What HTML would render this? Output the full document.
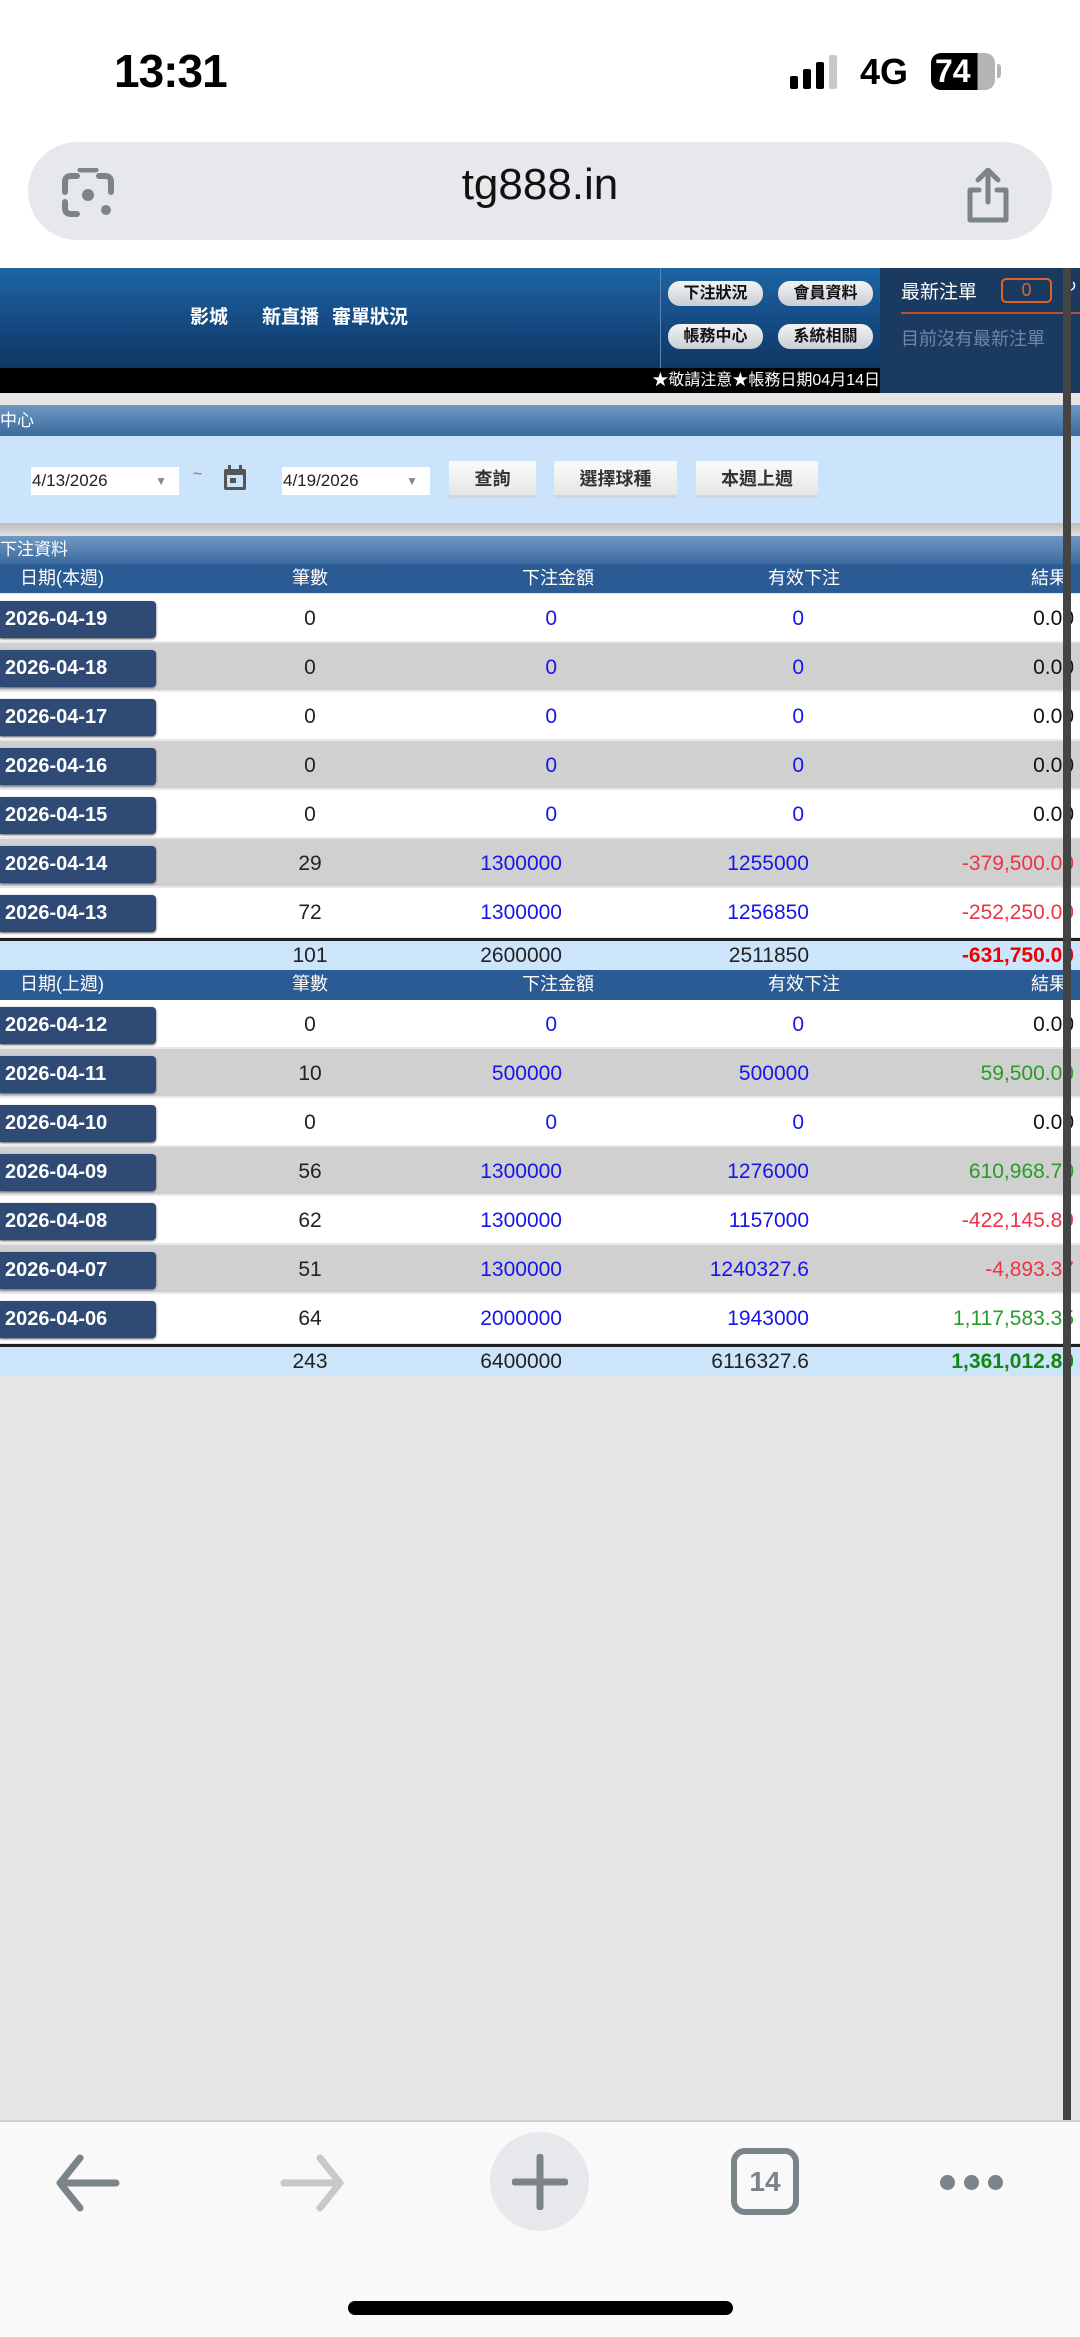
<!DOCTYPE html>
<html><head><meta charset="utf-8"><style>
*{margin:0;padding:0;box-sizing:border-box}
body{width:1080px;height:2337px;position:relative;overflow:hidden;background:#e5e5e5;font-family:"Liberation Sans","Noto Sans CJK TC",sans-serif}
.a{position:absolute}
.top{left:0;top:0;width:1080px;height:268px;background:#fff}
.hdr{left:0;top:268px;width:880px;height:100px;background:linear-gradient(#1e65a6,#14487f 60%,#0f3763)}
.blk{left:0;top:368px;width:880px;height:25px;background:#000;color:#fff;font-size:16px;line-height:25px;text-align:right;white-space:nowrap;overflow:hidden}
.rp{left:880px;top:268px;width:200px;height:125px;background:#1b3a60}
.hb{height:25px;width:95px;border-radius:12px;background:linear-gradient(#f3f3f3,#c9ced6);color:#111;font-size:16px;line-height:25px;text-align:center;font-weight:bold}
.bar{left:0;width:1080px;background:linear-gradient(#6f98c3,#3b6a9f);color:#fff;font-size:17px}
.th{left:0;width:1080px;height:29px;background:#2b5b95;color:#fff;font-size:18px;line-height:29px}
.row{left:0;width:1080px;height:49px;font-size:21px;line-height:49px;border-bottom:2px solid #e8e8e8}
.g{background:#d0d0d0}.w{background:#fff}
.db{position:absolute;left:0;top:7px;width:156px;height:37px;background:#2f4a74;border-radius:0 4px 4px 0;color:#fff;font-weight:bold;font-size:20px;line-height:37px;padding-left:5px;box-shadow:0 1px 2px #555}
.c1{position:absolute;left:260px;width:100px;text-align:center;color:#222}
.c2{position:absolute;right:518px;color:#1515ee}
.c3{position:absolute;right:271px;color:#1515ee}
.c4{position:absolute;right:6px;color:#111}
.r{color:#ee3344!important}.gr{color:#2a9a2a!important}
.tot{left:0;width:1080px;height:32px;background:#cde5fb;border-top:3px solid #222;font-size:21px;line-height:29px}
.tot .c2,.tot .c3{color:#222}
.btn{top:461px;height:37px;background:linear-gradient(#fafafa,#e6e6e6);border-bottom:3px solid #cfd6de;font-size:18px;font-weight:bold;color:#333;text-align:center;line-height:36px;border-radius:2px}
.inp{top:467px;height:28px;background:#fff;font-size:17px;line-height:28px;padding-left:1px;color:#222}
</style></head><body>
<div class="a top"></div>
<div class="a" style="left:114px;top:44px;font-size:46px;font-weight:bold;letter-spacing:-1px">13:31</div>
<div class="a" style="left:790px;top:76px;width:8px;height:13px;background:#000;border-radius:2px"></div>
<div class="a" style="left:803px;top:69px;width:8px;height:20px;background:#000;border-radius:2px"></div>
<div class="a" style="left:816px;top:62px;width:8px;height:27px;background:#000;border-radius:2px"></div>
<div class="a" style="left:829px;top:55px;width:8px;height:34px;background:#c8c8c8;border-radius:2px"></div>
<div class="a" style="left:860px;top:51px;font-size:36px;font-weight:bold">4G</div>
<div class="a" style="left:931px;top:53px;width:64px;height:37px;border-radius:10px;background:linear-gradient(90deg,#000 73%,#b5b5b5 73%);color:#fff;font-weight:bold;font-size:32px;line-height:37px;padding-left:4px">74</div>
<div class="a" style="left:997px;top:64px;width:4px;height:14px;background:#b5b5b5;border-radius:0 3px 3px 0"></div>
<div class="a" style="left:28px;top:142px;width:1024px;height:98px;border-radius:49px;background:#e6e8eb"></div>
<div class="a" style="left:0;top:160px;width:1080px;text-align:center;font-size:44px;color:#111">tg888.in</div>
<svg class="a" style="left:60px;top:168px" width="56" height="52" viewBox="0 0 56 52" fill="none" stroke="#7b8489" stroke-width="6" stroke-linecap="round"><path d="M5 24V14q0-6 6-6h6M39 8h6q6 0 6 6v10M5 34v6q0 6 6 6h6"/><path d="M20 2h16" stroke-width="5"/><circle cx="28" cy="27" r="6" fill="#7b8489" stroke="none"/><circle cx="46" cy="42" r="5" fill="#7b8489" stroke="none"/></svg>
<svg class="a" style="left:962px;top:168px" width="52" height="56" viewBox="0 0 52 56" fill="none" stroke="#7b8489" stroke-width="5" stroke-linecap="round" stroke-linejoin="round"><path d="M17 22h-9v30h36V22h-9"/><path d="M26 34V3M16 12l10-10 10 10"/></svg>

<div class="a hdr"></div>
<div class="a" style="left:660px;top:268px;width:1px;height:100px;background:#5d86b3"></div>
<div class="a" style="left:190px;top:302px;color:#fff;font-size:19px;font-weight:bold;white-space:nowrap">影城<span style="margin-left:34px">新直播</span><span style="margin-left:13px">審單狀況</span></div>
<div class="a hb" style="left:668px;top:281px">下注狀況</div>
<div class="a hb" style="left:778px;top:281px">會員資料</div>
<div class="a hb" style="left:668px;top:324px">帳務中心</div>
<div class="a hb" style="left:778px;top:324px">系統相關</div>
<div class="a blk">★敬請注意★帳務日期04月14日</div>
<div class="a rp"></div>
<div class="a" style="left:901px;top:277px;color:#fff;font-size:19px">最新注單</div>
<div class="a" style="left:1001px;top:278px;width:51px;height:25px;border:2px solid #e0622a;border-radius:5px;color:#e0622a;font-size:18px;text-align:center;line-height:21px">0</div>
<div class="a" style="left:1062px;top:276px;color:#fff;font-size:18px">↻</div>
<div class="a" style="left:901px;top:312px;width:179px;height:2px;background:#c0502a"></div>
<div class="a" style="left:901px;top:325px;color:#6f86a6;font-size:18px">目前沒有最新注單</div>

<div class="a bar" style="top:405px;height:31px;line-height:31px">中心</div>
<div class="a" style="left:0;top:436px;width:1080px;height:87px;background:#cce4fb"></div>
<div class="a inp" style="left:31px;width:148px">4/13/2026<span style="position:absolute;right:12px;color:#888;font-size:12px">▼</span></div>
<div class="a" style="left:193px;top:466px;color:#777;font-size:16px">~</div>
<svg class="a" style="left:223px;top:465px" width="24" height="26" viewBox="0 0 24 26"><rect x="1" y="4" width="22" height="21" rx="2" fill="#555"/><rect x="4" y="10" width="16" height="12" fill="#cce4fb"/><rect x="7" y="13" width="6" height="5" fill="#555"/><rect x="5" y="0" width="3" height="6" fill="#555"/><rect x="16" y="0" width="3" height="6" fill="#555"/></svg>
<div class="a inp" style="left:282px;width:148px">4/19/2026<span style="position:absolute;right:12px;color:#888;font-size:12px">▼</span></div>
<div class="a btn" style="left:449px;width:87px">查詢</div>
<div class="a btn" style="left:554px;width:123px">選擇球種</div>
<div class="a btn" style="left:696px;width:122px">本週上週</div>
<div class="a" style="left:0;top:523px;width:1080px;height:13px;background:linear-gradient(#bcbcbc,#e0e0e0)"></div>
<div class="a bar" style="top:536px;height:28px;line-height:28px">下注資料</div>

<div class="a th" style="top:564px"><span style="position:absolute;left:20px">日期(本週)</span><span style="position:absolute;left:292px">筆數</span><span style="position:absolute;left:522px">下注金額</span><span style="position:absolute;left:768px">有效下注</span><span style="position:absolute;left:1031px">結果</span></div>

<div class="a row w" style="top:594px"><div class="db">2026-04-19</div><span class="c1">0</span><span class="c2" style="right:523px">0</span><span class="c3" style="right:276px">0</span><span class="c4">0.00</span></div>
<div class="a row g" style="top:643px"><div class="db">2026-04-18</div><span class="c1">0</span><span class="c2" style="right:523px">0</span><span class="c3" style="right:276px">0</span><span class="c4">0.00</span></div>
<div class="a row w" style="top:692px"><div class="db">2026-04-17</div><span class="c1">0</span><span class="c2" style="right:523px">0</span><span class="c3" style="right:276px">0</span><span class="c4">0.00</span></div>
<div class="a row g" style="top:741px"><div class="db">2026-04-16</div><span class="c1">0</span><span class="c2" style="right:523px">0</span><span class="c3" style="right:276px">0</span><span class="c4">0.00</span></div>
<div class="a row w" style="top:790px"><div class="db">2026-04-15</div><span class="c1">0</span><span class="c2" style="right:523px">0</span><span class="c3" style="right:276px">0</span><span class="c4">0.00</span></div>
<div class="a row g" style="top:839px"><div class="db">2026-04-14</div><span class="c1">29</span><span class="c2">1300000</span><span class="c3">1255000</span><span class="c4 r">-379,500.00</span></div>
<div class="a row w" style="top:888px;border:0"><div class="db">2026-04-13</div><span class="c1">72</span><span class="c2">1300000</span><span class="c3">1256850</span><span class="c4 r">-252,250.00</span></div>
<div class="a tot" style="top:938px"><span class="c1">101</span><span class="c2">2600000</span><span class="c3">2511850</span><span class="c4" style="color:#ee0000;font-weight:bold">-631,750.00</span></div>

<div class="a th" style="top:970px;height:30px"><span style="position:absolute;left:20px">日期(上週)</span><span style="position:absolute;left:292px">筆數</span><span style="position:absolute;left:522px">下注金額</span><span style="position:absolute;left:768px">有效下注</span><span style="position:absolute;left:1031px">結果</span></div>

<div class="a row w" style="top:1000px"><div class="db">2026-04-12</div><span class="c1">0</span><span class="c2" style="right:523px">0</span><span class="c3" style="right:276px">0</span><span class="c4">0.00</span></div>
<div class="a row g" style="top:1049px"><div class="db">2026-04-11</div><span class="c1">10</span><span class="c2">500000</span><span class="c3">500000</span><span class="c4 gr">59,500.00</span></div>
<div class="a row w" style="top:1098px"><div class="db">2026-04-10</div><span class="c1">0</span><span class="c2" style="right:523px">0</span><span class="c3" style="right:276px">0</span><span class="c4">0.00</span></div>
<div class="a row g" style="top:1147px"><div class="db">2026-04-09</div><span class="c1">56</span><span class="c2">1300000</span><span class="c3">1276000</span><span class="c4 gr">610,968.70</span></div>
<div class="a row w" style="top:1196px"><div class="db">2026-04-08</div><span class="c1">62</span><span class="c2">1300000</span><span class="c3">1157000</span><span class="c4 r">-422,145.89</span></div>
<div class="a row g" style="top:1245px"><div class="db">2026-04-07</div><span class="c1">51</span><span class="c2">1300000</span><span class="c3">1240327.6</span><span class="c4 r">-4,893.37</span></div>
<div class="a row w" style="top:1294px;border:0"><div class="db">2026-04-06</div><span class="c1">64</span><span class="c2">2000000</span><span class="c3">1943000</span><span class="c4 gr">1,117,583.35</span></div>
<div class="a tot" style="top:1344px"><span class="c1">243</span><span class="c2">6400000</span><span class="c3">6116327.6</span><span class="c4" style="color:#118811;font-weight:bold">1,361,012.80</span></div>

<div class="a" style="left:1063px;top:268px;width:8px;height:1852px;background:#444"></div>

<div class="a" style="left:0;top:2120px;width:1080px;height:217px;background:#f9f9f9;border-top:2px solid #d0d0d0"></div>
<svg class="a" style="left:54px;top:2154px" width="66" height="58" viewBox="0 0 66 58" fill="none" stroke="#7b8489" stroke-width="7" stroke-linecap="round" stroke-linejoin="round"><path d="M26 4L6 29l20 25M6 29h56"/></svg>
<svg class="a" style="left:280px;top:2154px" width="66" height="58" viewBox="0 0 66 58" fill="none" stroke="#c8c8c8" stroke-width="7" stroke-linecap="round" stroke-linejoin="round"><path d="M40 4l20 25-20 25M60 29H4"/></svg>
<div class="a" style="left:490px;top:2132px;width:99px;height:99px;border-radius:50%;background:#e6e8eb"></div>
<svg class="a" style="left:512px;top:2154px" width="56" height="56" viewBox="0 0 56 56" stroke="#7b8489" stroke-width="7" stroke-linecap="round"><path d="M28 3v50M3 28h50"/></svg>
<div class="a" style="left:731px;top:2148px;width:68px;height:67px;border:6px solid #7b8489;border-radius:14px;color:#7b8489;font-weight:bold;font-size:28px;text-align:center;line-height:55px">14</div>
<div class="a" style="left:940px;top:2175px;width:15px;height:15px;border-radius:50%;background:#7b8489"></div>
<div class="a" style="left:964px;top:2175px;width:15px;height:15px;border-radius:50%;background:#7b8489"></div>
<div class="a" style="left:988px;top:2175px;width:15px;height:15px;border-radius:50%;background:#7b8489"></div>
<div class="a" style="left:348px;top:2301px;width:385px;height:14px;border-radius:7px;background:#000"></div>
</body></html>
